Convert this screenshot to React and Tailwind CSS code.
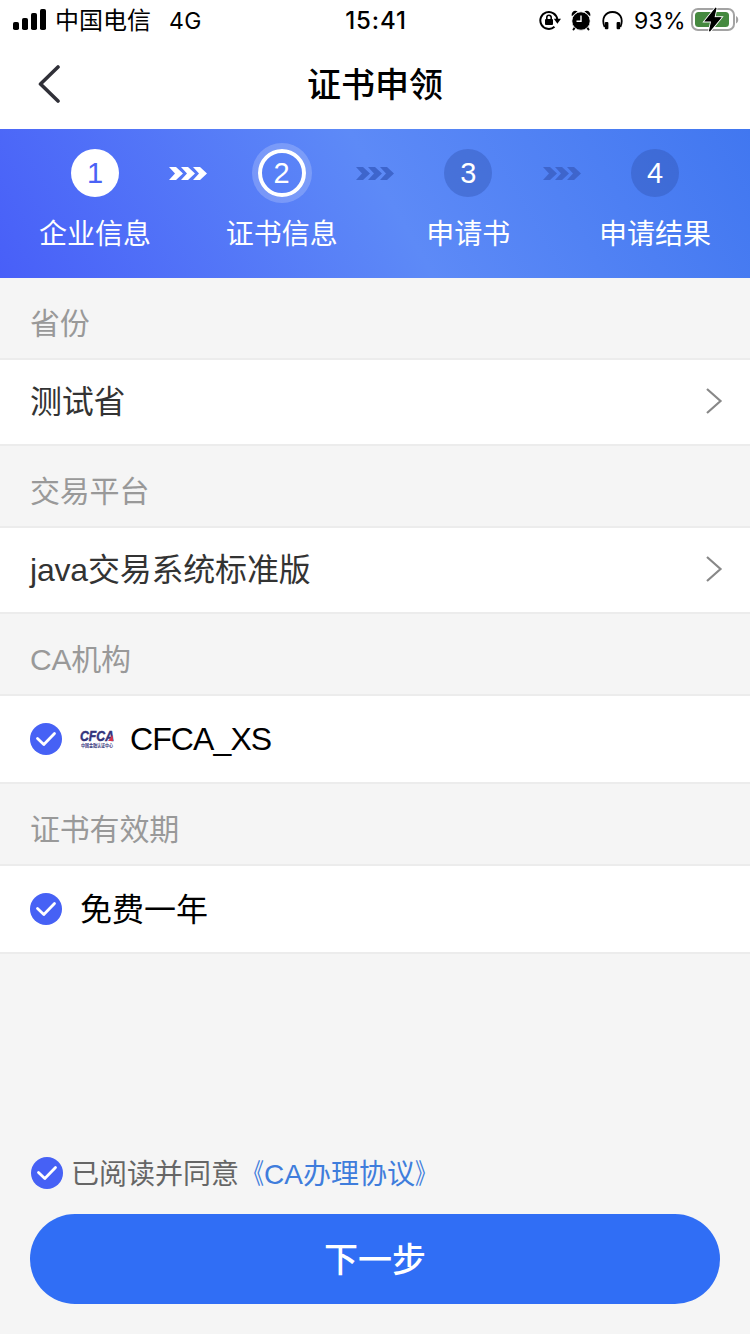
import React, { useState } from 'react';

const steps = [
  { id: 1, label: '企业信息', status: 'done' },
  { id: 2, label: '证书信息', status: 'current' },
  { id: 3, label: '申请书', status: 'todo' },
  { id: 4, label: '申请结果', status: 'todo' },
];

const circleStyles = {
  done: 'bg-white text-[#4a62f5]',
  current: 'border-4 border-white text-white ring-6 ring-white/20',
  todo: 'bg-[#3052b0]/40 text-white',
};

function StatusBar() {
  return (
    <div className="flex h-10 items-center pl-[13px] pr-[11px] font-['Inter','Noto_Sans_CJK_SC',sans-serif] text-[23px] leading-10 text-black">
      <div className="flex flex-1 items-center">
        <svg width="33" height="22" viewBox="0 0 33 22" fill="currentColor">
          <rect x="0" y="13" width="6" height="8" rx="1.8" />
          <rect x="9" y="9" width="6" height="12" rx="1.8" />
          <rect x="18" y="4" width="6" height="17" rx="1.8" />
          <rect x="27" y="0" width="6" height="21" rx="1.8" />
        </svg>
        <span className="ml-[9px] pt-0.5 text-[24px]">中国电信</span>
        <span className="ml-[18px] pt-0.5 tracking-[0.5px]">4G</span>
      </div>
      <span className="pt-0.5 text-[24px] font-medium tracking-[0.9px]">15:41</span>
      <div className="flex flex-1 items-center justify-end">
        {/* rotation lock */}
        <svg width="22" height="20" viewBox="0 0 22 20" fill="none" stroke="currentColor" strokeWidth="2">
          <path d="M18.300 9.500A8.500 8.500 0 1 0 15.500 16.800" />
          <path d="M14.800 8.800h7.200l-3.600 5z" fill="currentColor" stroke="none" />
          <rect x="6" y="9" width="8" height="6" rx="1" fill="currentColor" stroke="none" />
          <path d="M7.800 9.500V7.400a2.200 2.200 0 0 1 4.400 0v2.100" strokeWidth="1.600" />
        </svg>
        {/* alarm */}
        <svg className="ml-[10px]" width="20" height="21" viewBox="0 0 20 21">
          <path d="M.9 6.300C-.3 2.500 2.800-.6 6.600 1.300zM19.100 6.300C20.300 2.500 17.200-.6 13.400 1.300z" fill="currentColor" />
          <path d="M4.500 16.500l-2 3M15.500 16.500l2 3" stroke="currentColor" strokeWidth="2" strokeLinecap="round" />
          <circle cx="10" cy="11" r="9.200" fill="currentColor" stroke="white" strokeWidth="0.800" />
          <path d="M10 5.500v5.800H5.500" fill="none" stroke="white" strokeWidth="1.400" />
        </svg>
        {/* headphones */}
        <svg className="ml-[11px]" width="21" height="20" viewBox="0 0 21 20" fill="none" stroke="currentColor" strokeWidth="1.800">
          <path d="M2.600 17C-1 8.500 3.200 2 10.500 2S22 8.500 18.400 17" />
          <rect x="2.800" y="12" width="3.600" height="7.200" rx="1" fill="currentColor" stroke="none" />
          <rect x="14.600" y="12" width="3.600" height="7.200" rx="1" fill="currentColor" stroke="none" />
        </svg>
        <span className="ml-[11px] pt-0.5 tracking-[0.3px]">93%</span>
        <svg className="ml-[5px]" width="48" height="26" viewBox="0 0 48 26">
          <rect x="1" y="2" width="42" height="21" rx="6" fill="none" stroke="#a3a3a3" strokeWidth="2" />
          <path d="M45 9v7.500c3-1.500 3-6 0-7.500" fill="#a3a3a3" />
          <rect x="4" y="5" width="34" height="15" rx="3.500" fill="#45893f" />
          <path d="M25 1L14.500 14h6.300L18.500 24.200 29.500 10.800h-6.700z" fill="black" stroke="white" strokeWidth="3" paintOrder="stroke" />
          <path d="M25 1L14.500 14h6.300L18.500 24.200 29.500 10.800h-6.700z" fill="black" stroke="black" strokeWidth="1.200" />
        </svg>
      </div>
    </div>
  );
}

function NavBar() {
  return (
    <div className="flex h-[89px] items-center justify-between px-[37px]">
      <button aria-label="返回" className="-mt-0.5">
        <svg width="24" height="38" viewBox="0 0 24 38" fill="none" stroke="#303038" strokeWidth="3.6" strokeLinecap="round" strokeLinejoin="round">
          <path d="M21 2L3.500 19l17.500 17" />
        </svg>
      </button>
      <h1 className="pt-0.5 text-[34px] font-medium text-black">证书申领</h1>
      <div className="w-6" />
    </div>
  );
}

function StepArrows({ active }) {
  return (
    <svg className={`mt-[18px] ${active ? 'text-white' : 'text-[#3e65cc]'}`} width="38" height="13" viewBox="0 0 38 13" fill="currentColor">
      <path d="M0 0h7l7 6.500-7 6.500H0l6-6.500z" />
      <path d="M12 0h7l7 6.500-7 6.500h-7l6-6.500z" />
      <path d="M24 0h7l7 6.500-7 6.500h-7l6-6.500z" />
    </svg>
  );
}

function Steps() {
  return (
    <div className="flex h-[149px] items-start justify-between bg-[linear-gradient(60deg,#485ff8_0%,#5d8af7_52%,#4177f0_100%)] px-[39px] pt-5">
      {steps.map((step, i) => (
        <React.Fragment key={step.id}>
          {i > 0 && <StepArrows active={i === 1} />}
          <div className="flex w-28 flex-col items-center">
            <div className={`flex size-12 items-center justify-center rounded-full font-['Liberation_Sans',sans-serif] text-[29px] leading-none ${circleStyles[step.status]}`}>
              {step.id}
            </div>
            <span className="mt-[18px] whitespace-nowrap text-[28px] leading-10 text-white">{step.label}</span>
          </div>
        </React.Fragment>
      ))}
    </div>
  );
}

function CheckIcon() {
  return (
    <svg className="shrink-0" width="32" height="32" viewBox="0 0 32 32">
      <circle cx="16" cy="16" r="16" fill="#4661f5" />
      <path d="M7.500 15.500l6.300 6L24.500 10.500" fill="none" stroke="white" strokeWidth="2.800" strokeLinecap="round" strokeLinejoin="round" />
    </svg>
  );
}

function CfcaLogo() {
  return (
    <svg className="ml-[17px] shrink-0 overflow-visible" width="36" height="20" viewBox="0 0 36 20">
      <text x="1" y="12" fontFamily="Liberation Sans, sans-serif" fontSize="15.500" fontWeight="bold" fontStyle="italic" fill="#34347c" stroke="#34347c" strokeWidth="0.500" textLength="34" lengthAdjust="spacingAndGlyphs">CFCA</text>
      <path d="M29 12l4.500-6 .8 6z" fill="#d8344c" />
      <text x="2" y="18.300" fontFamily="Noto Sans CJK SC, sans-serif" fontSize="4.600" fontWeight="bold" fill="#34347c" textLength="32" lengthAdjust="spacingAndGlyphs">中国金融认证中心</text>
    </svg>
  );
}

function Section({ title, children }) {
  return (
    <section>
      <h2 className="flex h-20 items-center px-[30px] pt-2.5 text-[30px] tracking-[-0.2px] text-[#999]">{title}</h2>
      <div className="border-y-2 border-[#ececec] bg-white px-[30px] text-[32px]">{children}</div>
    </section>
  );
}

function SelectRow({ value }) {
  return (
    <button className="flex h-[84px] w-full items-center justify-between text-left text-[#333]">
      <span className="tracking-[-0.2px]">{value}</span>
      <svg className="-mt-0.5 -mr-[3px]" width="18" height="26" viewBox="0 0 18 26" fill="none" stroke="#888" strokeWidth="2.200">
        <path d="M2 1l13.500 12L2 25" />
      </svg>
    </button>
  );
}

function App() {
  const [agreed, setAgreed] = useState(true);

  return (
    <div className="flex h-[1334px] w-[750px] flex-col bg-[#f5f5f5] font-['Liberation_Sans','Noto_Sans_CJK_SC',sans-serif]">
      <header className="bg-white">
        <StatusBar />
        <NavBar />
      </header>
      <Steps />

      <Section title="省份">
        <SelectRow value="测试省" />
      </Section>
      <Section title="交易平台">
        <SelectRow value="java交易系统标准版" />
      </Section>
      <Section title="CA机构">
        <div className="flex h-[86px] items-center text-black">
          <CheckIcon />
          <CfcaLogo />
          <span className="ml-[15px] tracking-[-0.9px]">CFCA_XS</span>
        </div>
      </Section>
      <Section title="证书有效期">
        <div className="flex h-[86px] items-center text-black">
          <CheckIcon />
          <span className="ml-[18px] pt-0.5">免费一年</span>
        </div>
      </Section>

      {/* Agreement + submit, pinned to the bottom */}
      <footer className="mt-auto px-[30px] pb-[30px]">
        <div className="flex h-[42px] items-center pl-px text-[28px] text-[#666]">
          <button onClick={() => setAgreed(!agreed)} aria-label="同意协议" aria-pressed={agreed}>
            <CheckIcon />
          </button>
          <span className="ml-2 pt-1">已阅读并同意</span>
          <a className="-ml-[3px] flex pt-1 text-[#3f7ddc]">
            <span className="origin-right scale-x-75">《</span>
            <span>CA办理协议</span>
            <span className="origin-left scale-x-75">》</span>
          </a>
        </div>
        <button className="mt-5 h-[90px] w-full rounded-full bg-[#306ef5] pt-0.5 text-[34px] font-medium text-white">下一步</button>
      </footer>
    </div>
  );
}

export default App;
